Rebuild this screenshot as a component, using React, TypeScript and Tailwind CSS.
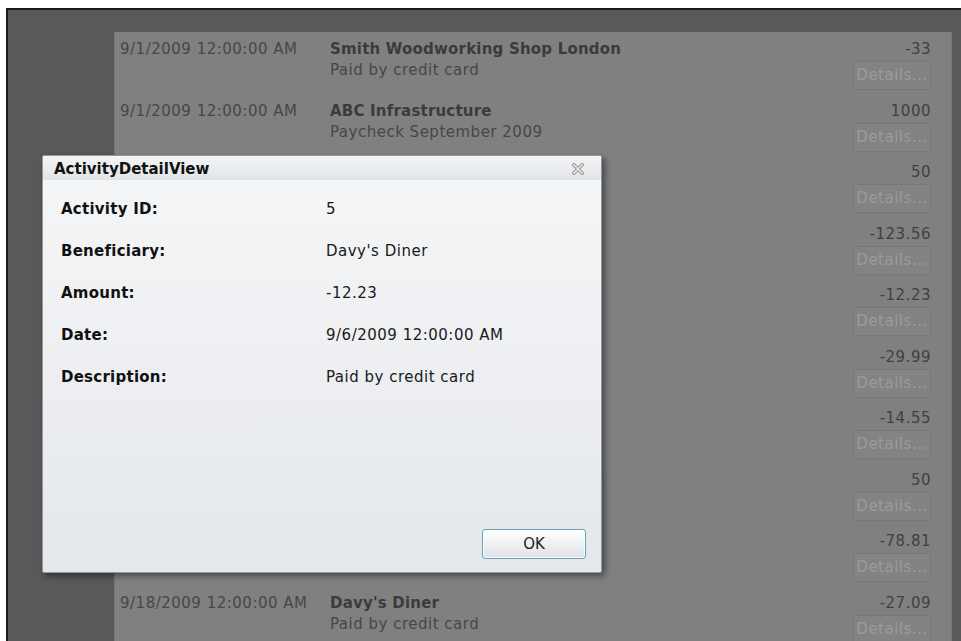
import React from "react";

interface Activity {
  date: string;
  name: string;
  description: string;
  amount: string;
}

// rows 3-9 sit behind the open detail window, only their amounts show
const activities: Activity[] = [
  { date: "9/1/2009 12:00:00 AM", name: "Smith Woodworking Shop London", description: "Paid by credit card", amount: "-33" },
  { date: "9/1/2009 12:00:00 AM", name: "ABC Infrastructure", description: "Paycheck September 2009", amount: "1000" },
  { date: "", name: "", description: "", amount: "50" },
  { date: "", name: "", description: "", amount: "-123.56" },
  { date: "", name: "", description: "", amount: "-12.23" },
  { date: "", name: "", description: "", amount: "-29.99" },
  { date: "", name: "", description: "", amount: "-14.55" },
  { date: "", name: "", description: "", amount: "50" },
  { date: "", name: "", description: "", amount: "-78.81" },
  { date: "9/18/2009 12:00:00 AM", name: "Davy's Diner", description: "Paid by credit card", amount: "-27.09" },
];

const details: [string, string][] = [
  ["Activity ID:", "5"],
  ["Beneficiary:", "Davy's Diner"],
  ["Amount:", "-12.23"],
  ["Date:", "9/6/2009 12:00:00 AM"],
  ["Description:", "Paid by credit card"],
];

function ActivityRow({ item }: { item: Activity }) {
  return (
    <div className="flex h-[61.56px] leading-[21px]">
      <div className="w-[210px] tracking-[0.5px] text-[#474747]">{item.date}</div>
      <div className="flex-1">
        <div className="font-bold tracking-[0.2px] text-[#3b3b3b]">{item.name}</div>
        <div className="tracking-[0.5px] text-[#474747]">{item.description}</div>
      </div>
      <div className="flex flex-col items-end">
        <div className="tracking-[0.5px] text-[#404040]">{item.amount}</div>
        <button className="mt-[1px] h-[29px] w-[78px] rounded-[3px] border border-[#777777] bg-[#838383] text-center leading-[27px] tracking-[0.5px] text-[#9b9b9b]">
          Details...
        </button>
      </div>
    </div>
  );
}

function CloseGlyph() {
  return (
    <svg width="12" height="12" viewBox="0 0 12 12">
      <g strokeLinecap="square">
        <path d="M1.8 1.8 L10.2 10.2 M10.2 1.8 L1.8 10.2" stroke="#9c9c9c" strokeWidth="3.6" />
        <path d="M1.8 1.8 L10.2 10.2 M10.2 1.8 L1.8 10.2" stroke="#ececec" strokeWidth="1.4" />
      </g>
    </svg>
  );
}

export default function App() {
  return (
    <div className="relative h-[641px] w-[961px] overflow-hidden bg-white pl-[6px] pt-[8px] font-['DejaVu_Sans',Verdana,sans-serif] text-[15px]">
      <div className="h-full border-l-2 border-t-2 border-[#1c1c1c] bg-[#595959] pl-[106px] pr-[9px] pt-[22px]">
        <div className="h-full border-x border-[#73787c] bg-[#808080] pl-[5px] pr-[20px] pt-[7px]">
          {activities.map((a, i) => (
            <ActivityRow key={i} item={a} />
          ))}
        </div>
      </div>

      {/* detail popup */}
      <div className="absolute left-[42px] top-[155px] flex h-[418px] w-[560px] flex-col rounded-[2px] border border-[#8e9aa6] bg-gradient-to-b from-[#f5f6f8] to-[#e5e8eb] shadow-[3px_3px_6px_rgba(0,0,0,0.45)]">
        <div className="flex h-[24px] items-start justify-between bg-gradient-to-b from-[#f3f4f5] to-[#e2e5e8] pl-[11px] pr-[17px] pt-[4px] leading-[18px]">
          <span className="font-bold text-[#111111]">ActivityDetailView</span>
          <span className="mt-[3px]">
            <CloseGlyph />
          </span>
        </div>
        <div className="flex flex-1 flex-col pl-[18px] pr-[15px] pb-[13px] pt-[20px]">
          {details.map(([label, value]) => (
            <div key={label} className="flex h-[42px] leading-[18px]">
              <div className="w-[265px] font-bold tracking-[0.25px] text-[#111111]">{label}</div>
              <div className="tracking-[0.5px] text-[#1a1a1a]">{value}</div>
            </div>
          ))}
          <div className="flex-1" />
          <div className="flex justify-end">
            <button className="h-[30px] w-[104px] rounded-[3px] border border-[#6d9fb8] bg-gradient-to-b from-[#ffffff] to-[#dfe2e6] text-[#222222] shadow-[inset_0_0_0_1px_rgba(255,255,255,0.8)]">
              OK
            </button>
          </div>
        </div>
      </div>
    </div>
  );
}
